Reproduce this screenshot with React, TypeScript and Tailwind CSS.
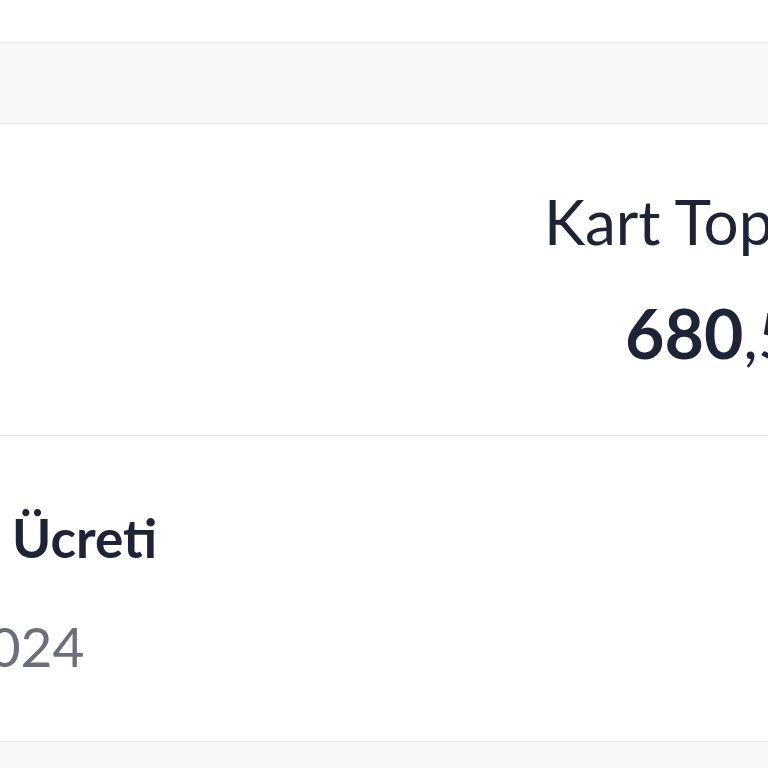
import React from 'react';

const font = { fontFamily: 'Lato, "Noto Sans", sans-serif' };

export default function App() {
  return (
    <div className="w-[768px] h-[768px] overflow-hidden bg-white" style={font}>
      <div className="h-[43px] bg-white border-b border-[#e6e7eb]" />
      <div className="h-[81px] bg-[#f8f8fa] border-b border-[#e9eaee]" />

      <div className="h-[312px] bg-white border-b border-[#e3e4e8] flex flex-col pl-[544px] pt-[59px]">
        <div className="whitespace-nowrap text-[62px] leading-[76px] text-[#1e2336]">Kart Toplamı</div>
        <div className="whitespace-nowrap mt-[34px] pl-[81px] text-[#1e2336]">
          <span className="text-[68px] leading-[80px] font-bold">680</span>
          <span className="text-[64px] leading-[80px]">,50 ₺</span>
        </div>
      </div>

      <div className="h-[306px] bg-white border-b border-[#e3e4e8] flex flex-col pt-[70px]">
        <div className="whitespace-nowrap pl-[12px] text-[53px] leading-[64px] font-bold text-[#1e2336]">Ücreti</div>
        <div className="whitespace-nowrap mt-[44px] -ml-[120px] text-[55px] leading-[64px] text-[#6b6f7b]">12.2024</div>
      </div>

      <div className="h-[100px] bg-[#f8f8fa]" />
    </div>
  );
}
